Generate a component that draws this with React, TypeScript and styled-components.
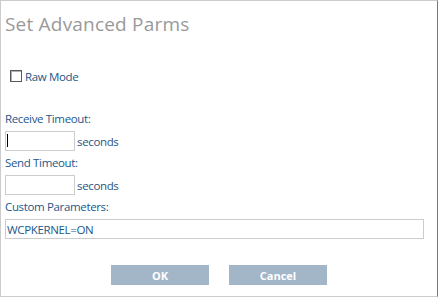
import React from "react";
import styled, { createGlobalStyle } from "styled-components";

const Global = createGlobalStyle`
  html, body { margin: 0; padding: 0; background: #fff; }
  body { font-family: "Open Sans", "Liberation Sans", sans-serif; }
`;

const Dialog = styled.div`
  box-sizing: border-box;
  width: 438px;
  height: 297px;
  border-top: 1px solid #cccccc;
  border-left: 1px solid #cccccc;
  border-bottom: 1px solid #cccccc;
  border-right: 1px solid #7a7a7a;
  padding: 0 0 0 4px;
  display: flex;
  flex-direction: column;
`;

const Title = styled.h1`
  margin: 0;
  padding-top: 11px;
  font-size: 19px;
  line-height: 24px;
  font-weight: 400;
  color: #999999;
  letter-spacing: 0.2px;
`;

const CheckRow = styled.label`
  margin-top: 32px;
  height: 16px;
  display: flex;
  align-items: center;
  gap: 3px;
  padding-left: 5px;
  font-size: 11.5px;
  letter-spacing: -0.35px;
  color: #22578a;
`;

const Box = styled.span`
  box-sizing: border-box;
  width: 12px;
  height: 12px;
  border: 1px solid #5a5a5a;
  box-shadow: inset 1px 1px 0 #b0b0b0;
  background: #fff;
`;

const Form = styled.div`
  margin-top: 27px;
  display: flex;
  flex-direction: column;
  gap: 4px;
`;

const Group = styled.div`
  display: flex;
  flex-direction: column;
  gap: 4px;
`;

const Label = styled.div`
  font-size: 11.5px;
  letter-spacing: -0.35px;
  line-height: 16px;
  height: 16px;
  color: #22578a;
`;

const InputRow = styled.div`
  display: flex;
  align-items: center;
  gap: 2px;
`;

const Field = styled.div<{ $w: number }>`
  position: relative;
  box-sizing: border-box;
  width: ${(p) => p.$w}px;
  height: 20px;
  border: 1px solid #cccccc;
  background: #fff;
  display: flex;
  align-items: center;
  padding-left: 1px;
  font-size: 11.5px;
  letter-spacing: -0.35px;
  color: #22578a;
`;

const Caret = styled.span`
  position: absolute;
  left: 1px;
  top: 2px;
  width: 1px;
  height: 13px;
  background: #000;
`;

const Unit = styled.span`
  font-size: 11.5px;
  letter-spacing: -0.35px;
  color: #2a5480;
`;

const Buttons = styled.div`
  margin-top: 26px;
  margin-left: -4px;
  display: flex;
  justify-content: center;
  gap: 20px;
`;

const Button = styled.button`
  width: 98px;
  height: 20px;
  border: none;
  padding: 0;
  background: #a2b6c8;
  color: #ffffff;
  font-family: "Open Sans", "Liberation Sans", sans-serif;
  font-weight: 700;
  font-size: 11px;
  cursor: pointer;
`;

export default function App() {
  return (
    <>
      <Global />
      <Dialog>
        <Title>Set Advanced Parms</Title>
        <CheckRow>
          <Box />
          Raw Mode
        </CheckRow>
        <Form>
          <Group>
            <Label>Receive Timeout:</Label>
            <InputRow>
              <Field $w={70}>
                <Caret />
              </Field>
              <Unit>seconds</Unit>
            </InputRow>
          </Group>
          <Group>
            <Label>Send Timeout:</Label>
            <InputRow>
              <Field $w={70} />
              <Unit>seconds</Unit>
            </InputRow>
          </Group>
          <Group>
            <Label>Custom Parameters:</Label>
            <InputRow>
              <Field $w={419}>WCPKERNEL=ON</Field>
            </InputRow>
          </Group>
        </Form>
        <Buttons>
          <Button>OK</Button>
          <Button>Cancel</Button>
        </Buttons>
      </Dialog>
    </>
  );
}
